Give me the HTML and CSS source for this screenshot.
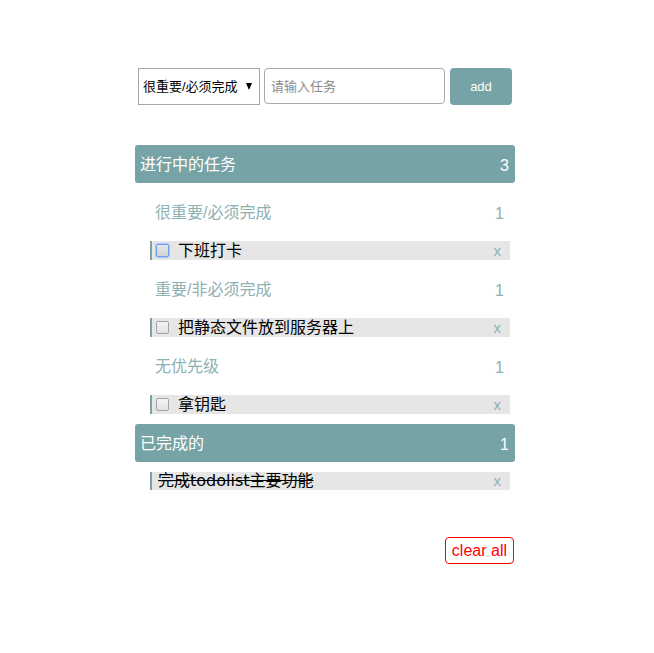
FILE: index.html
```html
<!DOCTYPE html>
<html lang="zh-CN">
<head>
<meta charset="utf-8">
<title>todolist</title>
<link rel="stylesheet" href="styles.css">
</head>
<body>
<div class="app">
  <form class="add-form" onsubmit="return false">
    <span class="select-wrap">
      <select class="priority">
        <option>很重要/必须完成</option>
        <option>重要/非必须完成</option>
        <option>无优先级</option>
      </select>
    </span>
    <input class="task-input" type="text" placeholder="请输入任务">
    <button class="add-btn" type="button">add</button>
  </form>

  <section class="section">
    <div class="section-head"><span>进行中的任务</span><span class="num">3</span></div>
    <div class="group">
      <div class="group-head"><span>很重要/必须完成</span><span class="num">1</span></div>
      <div class="item"><span class="check focused"></span><span class="item-text">下班打卡</span><span class="del">x</span></div>
    </div>
    <div class="group">
      <div class="group-head"><span>重要/非必须完成</span><span class="num">1</span></div>
      <div class="item"><span class="check"></span><span class="item-text">把静态文件放到服务器上</span><span class="del">x</span></div>
    </div>
    <div class="group">
      <div class="group-head"><span>无优先级</span><span class="num">1</span></div>
      <div class="item"><span class="check"></span><span class="item-text">拿钥匙</span><span class="del">x</span></div>
    </div>
  </section>

  <section class="section done">
    <div class="section-head"><span>已完成的</span><span class="num">1</span></div>
    <div class="item done-item"><span class="item-text">完成todolist主要功能</span><span class="del">x</span></div>
  </section>

  <div class="footer">
    <button class="clear-btn" type="button">clear all</button>
  </div>
</div>
</body>
</html>
```

FILE: styles.css
```css
* { box-sizing: border-box; }

body {
  margin: 0;
  font-family: "Liberation Sans", "Noto Sans CJK SC", sans-serif;
  background: #fff;
}

.app {
  width: 380px;
  margin: 0 0 0 135px;
}

.add-form {
  display: flex;
  align-items: center;
  margin-top: 67px;
  padding-left: 3px;
  height: 38px;
}

.select-wrap {
  position: relative;
  display: block;
  width: 122px;
  height: 37px;
}

.select-wrap::after {
  content: "";
  position: absolute;
  right: 8px;
  top: 15px;
  width: 0;
  height: 0;
  border-left: 3.5px solid transparent;
  border-right: 3.5px solid transparent;
  border-top: 7px solid #000;
  pointer-events: none;
}

.priority {
  appearance: none;
  -webkit-appearance: none;
  width: 122px;
  height: 37px;
  border: 1px solid #a6a6a6;
  border-radius: 0;
  background: #fff;
  padding: 0 0 0 4px;
  font-family: "Liberation Sans", "Noto Sans CJK SC", sans-serif;
  font-size: 13px;
  color: #000;
}

.task-input {
  margin-left: 4px;
  width: 181px;
  height: 36px;
  border: 1px solid #a9a9a9;
  border-radius: 4px;
  padding: 0 0 0 6px;
  font-family: "Liberation Sans", "Noto Sans CJK SC", sans-serif;
  font-size: 13px;
}

.task-input::placeholder { color: #8c8c8c; }

.add-btn {
  margin-left: 5px;
  width: 62px;
  height: 37px;
  border: none;
  border-radius: 4px;
  background: #76a3a6;
  color: #fff;
  font-family: "Liberation Sans", "Noto Sans CJK SC", sans-serif;
  font-size: 13px;
  padding: 0;
}

.section { margin-top: 40px; }
.section.done { margin-top: 10px; }

.section-head {
  display: flex;
  justify-content: space-between;
  align-items: center;
  height: 38px;
  padding: 2px 6px 0 5px;
  background: #76a3a6;
  border-radius: 3px;
  color: #fff;
  font-size: 16px;
  line-height: 20px;
}

.num {
  position: relative;
  top: 1px;
}

.group-head {
  display: flex;
  justify-content: space-between;
  align-items: center;
  height: 58px;
  padding: 2px 11px 0 20px;
  color: #8eb1b3;
  font-size: 16px;
  line-height: 20px;
}

.item {
  display: flex;
  align-items: center;
  height: 19px;
  margin: 0 5px 0 15px;
  background: #e6e6e6;
  border-left: 2px solid #76a3a6;
  font-size: 16px;
  line-height: 19px;
  color: #000;
}

.check {
  flex: none;
  width: 13px;
  height: 13px;
  margin-left: 4px;
  border: 1px solid #a3a3a3;
  border-radius: 2px;
  background: linear-gradient(#f4f4f4, #e2e2e2);
}

.check.focused {
  border-color: #6f9ff0;
  box-shadow: 0 0 0 1px #a9c6f5;
  background: linear-gradient(#e6e6e6, #d4d4d4);
}

.item-text {
  margin-left: 9px;
  flex: 1;
  white-space: nowrap;
}

.del {
  padding-right: 9px;
  color: #8eb1b3;
  font-size: 15px;
}

.done-item {
  margin-top: 10px;
  height: 18px;
  line-height: 18px;
}

.done-item .item-text {
  margin-left: 6px;
  font-family: "DejaVu Sans", "Noto Sans CJK SC", sans-serif;
  text-decoration: line-through;
}

.footer {
  display: flex;
  justify-content: flex-end;
  margin-top: 47px;
  padding-right: 1px;
}

.clear-btn {
  height: 27px;
  padding: 0 6px;
  border: 1px solid #ff0000;
  border-radius: 4px;
  background: #fff;
  color: #ff0000;
  font-family: "Liberation Sans", "Noto Sans CJK SC", sans-serif;
  font-size: 16px;
}
```
